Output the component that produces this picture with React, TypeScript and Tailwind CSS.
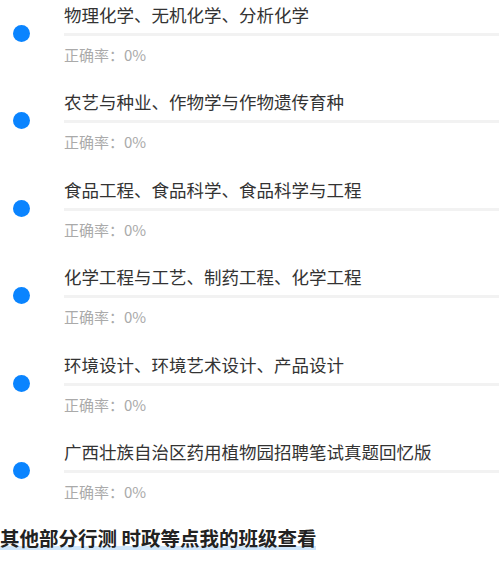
import React from 'react';

const items = [
  "物理化学、无机化学、分析化学",
  "农艺与种业、作物学与作物遗传育种",
  "食品工程、食品科学、食品科学与工程",
  "化学工程与工艺、制药工程、化学工程",
  "环境设计、环境艺术设计、产品设计",
  "广西壮族自治区药用植物园招聘笔试真题回忆版",
];

function App() {
  return (
    <div className="w-[499px] h-[584px] overflow-hidden bg-white font-['Noto_Sans_CJK_SC',sans-serif]">
      {items.map((title) => (
        <div key={title} className="flex h-[87.4px]">
          <div className="w-[64px] shrink-0 pl-[13px] pt-[25px]">
            <div className="w-[17px] h-[17px] rounded-full bg-[#0a84ff]" />
          </div>
          <div className="flex-1 pt-[2px]">
            <div className="text-[17.5px] leading-[26px] text-[#333] whitespace-nowrap">{title}</div>
            <div className="mt-[5px] h-[3px] bg-[#f2f2f2]" />
            <div className="mt-[9px] text-[15px] leading-[20px] text-[#aaa]">正确率：0%</div>
          </div>
        </div>
      ))}
      <div className="pt-[1px]">
        <span className="relative inline-block text-[19.5px] leading-[26px] font-bold text-[#222]">
          <span className="absolute left-0 right-0 bottom-[1px] h-[4px] bg-[#d0e6fa]" />
          <span className="relative">其他部分行测 时政等点我的班级查看</span>
        </span>
      </div>
    </div>
  );
}

export default App;
